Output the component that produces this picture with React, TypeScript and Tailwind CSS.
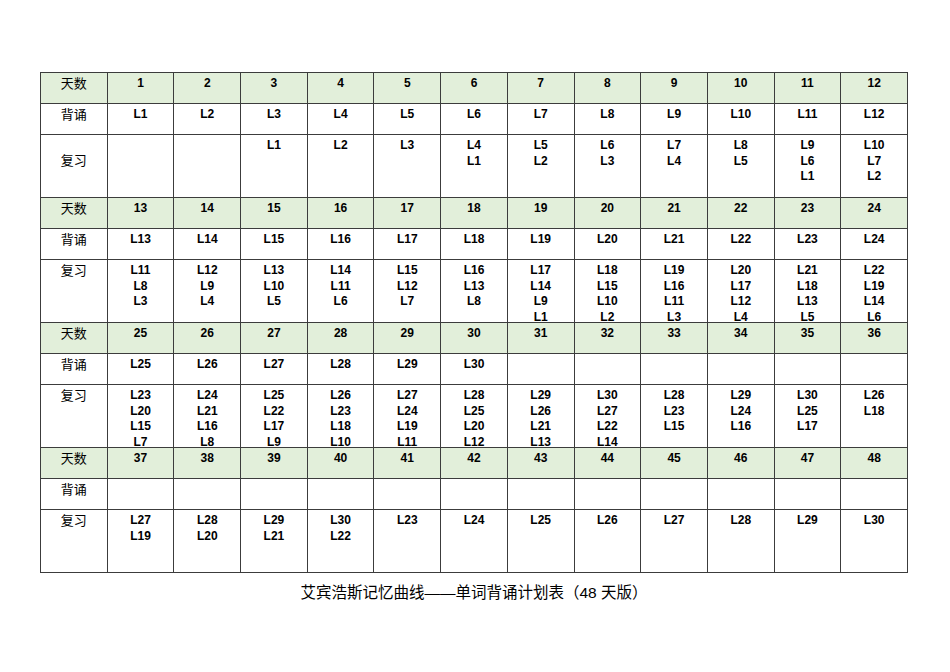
const blocks = [
  {
    days: [1, 2, 3, 4, 5, 6, 7, 8, 9, 10, 11, 12],
    learn: ["L1", "L2", "L3", "L4", "L5", "L6", "L7", "L8", "L9", "L10", "L11", "L12"],
    review: [
      [], [], ["L1"], ["L2"], ["L3"], ["L4", "L1"], ["L5", "L2"], ["L6", "L3"],
      ["L7", "L4"], ["L8", "L5"], ["L9", "L6", "L1"], ["L10", "L7", "L2"],
    ],
    centerLabel: true,
  },
  {
    days: [13, 14, 15, 16, 17, 18, 19, 20, 21, 22, 23, 24],
    learn: ["L13", "L14", "L15", "L16", "L17", "L18", "L19", "L20", "L21", "L22", "L23", "L24"],
    review: [
      ["L11", "L8", "L3"], ["L12", "L9", "L4"], ["L13", "L10", "L5"], ["L14", "L11", "L6"],
      ["L15", "L12", "L7"], ["L16", "L13", "L8"], ["L17", "L14", "L9", "L1"], ["L18", "L15", "L10", "L2"],
      ["L19", "L16", "L11", "L3"], ["L20", "L17", "L12", "L4"], ["L21", "L18", "L13", "L5"], ["L22", "L19", "L14", "L6"],
    ],
  },
  {
    days: [25, 26, 27, 28, 29, 30, 31, 32, 33, 34, 35, 36],
    learn: ["L25", "L26", "L27", "L28", "L29", "L30", "", "", "", "", "", ""],
    review: [
      ["L23", "L20", "L15", "L7"], ["L24", "L21", "L16", "L8"], ["L25", "L22", "L17", "L9"], ["L26", "L23", "L18", "L10"],
      ["L27", "L24", "L19", "L11"], ["L28", "L25", "L20", "L12"], ["L29", "L26", "L21", "L13"], ["L30", "L27", "L22", "L14"],
      ["L28", "L23", "L15"], ["L29", "L24", "L16"], ["L30", "L25", "L17"], ["L26", "L18"],
    ],
  },
  {
    days: [37, 38, 39, 40, 41, 42, 43, 44, 45, 46, 47, 48],
    learn: ["", "", "", "", "", "", "", "", "", "", "", ""],
    review: [
      ["L27", "L19"], ["L28", "L20"], ["L29", "L21"], ["L30", "L22"], ["L23"], ["L24"],
      ["L25"], ["L26"], ["L27"], ["L28"], ["L29"], ["L30"],
    ],
  },
];

const cell = "border-r border-b border-[#3c3c3c] text-center leading-[15.5px] pt-[3px]";
const label = "text-[13px] font-normal";
const value = "text-[12px] font-bold";

export default function App() {
  return (
    <div
      className="w-[950px] h-[672px] bg-white text-black pt-[72px] pl-[40px]"
      style={{ fontFamily: '"Liberation Sans", "Noto Sans CJK SC", sans-serif' }}
    >
      <div className="w-[868px] grid grid-cols-[repeat(13,minmax(0,1fr))] border-l border-t border-[#3c3c3c]">
        {blocks.map((b, bi) => (
          <div key={bi} className="contents">
            <div className={`${cell} ${label} h-[31px] bg-[#e2efda]`}>天数</div>
            {b.days.map((d) => (
              <div key={d} className={`${cell} ${value} h-[31px] bg-[#e2efda]`}>{d}</div>
            ))}
            <div className={`${cell} ${label} h-[31px]`}>背诵</div>
            {b.learn.map((l, i) => (
              <div key={i} className={`${cell} ${value} h-[31px]`}>{l}</div>
            ))}
            <div className={`${cell} ${label} h-[63px] ${b.centerLabel ? "pt-[18px]" : ""}`}>复习</div>
            {b.review.map((r, i) => (
              <div key={i} className={`${cell} ${value} h-[63px] overflow-hidden`}>
                {r.map((x, j) => (
                  <div key={j}>{x}</div>
                ))}
              </div>
            ))}
          </div>
        ))}
      </div>
      <p className="w-[868px] mt-[11px] text-center text-[15.5px] leading-[18px]">
        艾宾浩斯记忆曲线——单词背诵计划表（48 天版）
      </p>
    </div>
  );
}
